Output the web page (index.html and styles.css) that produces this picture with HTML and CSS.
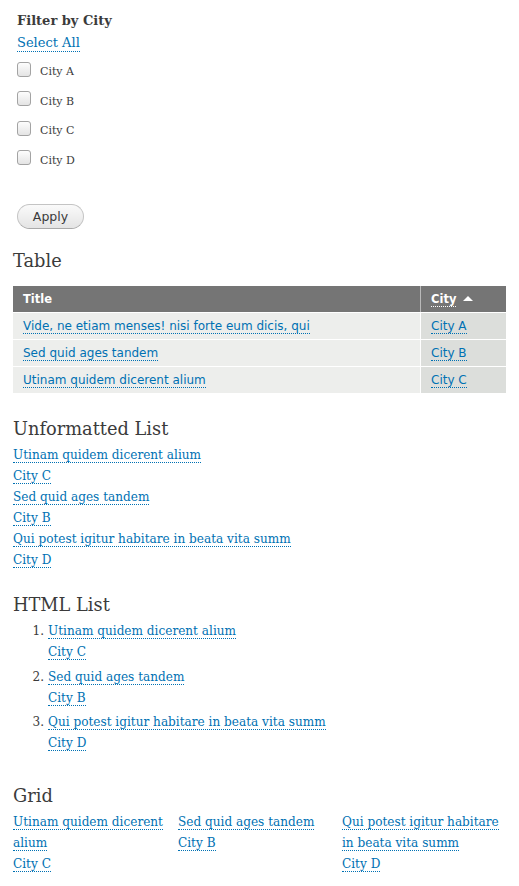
FILE: index.html
```html
<!DOCTYPE html>
<html>
<head>
<meta charset="utf-8">
<link rel="stylesheet" href="styles.css">
</head>
<body>
<div class="page">
  <form class="filter">
    <div class="filter-title">Filter by City</div>
    <a class="lnk select-all" href="#">Select All</a>
    <div class="opts">
      <label class="opt"><input type="checkbox" class="cb"><span>City A</span></label>
      <label class="opt"><input type="checkbox" class="cb"><span>City B</span></label>
      <label class="opt"><input type="checkbox" class="cb"><span>City C</span></label>
      <label class="opt"><input type="checkbox" class="cb"><span>City D</span></label>
    </div>
    <button type="button" class="btn">Apply</button>
  </form>

  <h2 class="h h-table">Table</h2>
  <table class="tbl">
    <thead>
      <tr><th class="c-title">Title</th><th class="c-city"><a class="th-lnk" href="#">City</a><span class="arrow"></span></th></tr>
    </thead>
    <tbody>
      <tr><td class="c-title"><a class="lnk" href="#">Vide, ne etiam menses! nisi forte eum dicis, qui</a></td><td class="c-city"><a class="lnk" href="#">City A</a></td></tr>
      <tr><td class="c-title"><a class="lnk" href="#">Sed quid ages tandem</a></td><td class="c-city"><a class="lnk" href="#">City B</a></td></tr>
      <tr><td class="c-title"><a class="lnk" href="#">Utinam quidem dicerent alium</a></td><td class="c-city"><a class="lnk" href="#">City C</a></td></tr>
    </tbody>
  </table>

  <h2 class="h h-list">Unformatted List</h2>
  <div class="ulist">
    <div class="row"><a class="lnk" href="#">Utinam quidem dicerent alium</a></div>
    <div class="row"><a class="lnk" href="#">City C</a></div>
    <div class="row"><a class="lnk" href="#">Sed quid ages tandem</a></div>
    <div class="row"><a class="lnk" href="#">City B</a></div>
    <div class="row"><a class="lnk" href="#">Qui potest igitur habitare in beata vita summ</a></div>
    <div class="row"><a class="lnk" href="#">City D</a></div>
  </div>

  <h2 class="h h-html">HTML List</h2>
  <ol class="olist">
    <li><div class="row"><a class="lnk" href="#">Utinam quidem dicerent alium</a></div><div class="row"><a class="lnk" href="#">City C</a></div></li>
    <li><div class="row"><a class="lnk" href="#">Sed quid ages tandem</a></div><div class="row"><a class="lnk" href="#">City B</a></div></li>
    <li><div class="row"><a class="lnk" href="#">Qui potest igitur habitare in beata vita summ</a></div><div class="row"><a class="lnk" href="#">City D</a></div></li>
  </ol>

  <h2 class="h h-grid">Grid</h2>
  <div class="grid">
    <div class="cell"><div class="row"><a class="lnk" href="#">Utinam quidem dicerent alium</a></div><div class="row"><a class="lnk" href="#">City C</a></div></div>
    <div class="cell"><div class="row"><a class="lnk" href="#">Sed quid ages tandem</a></div><div class="row"><a class="lnk" href="#">City B</a></div></div>
    <div class="cell"><div class="row"><a class="lnk" href="#">Qui potest igitur habitare in beata vita summ</a></div><div class="row"><a class="lnk" href="#">City D</a></div></div>
  </div>
</div>
</body>
</html>
```

FILE: styles.css
```css
html, body {
  margin: 0;
  padding: 0;
  background: #ffffff;
}
body {
  font-family: "DejaVu Serif", Georgia, serif;
  font-size: 12.1px;
  color: #3b3b3b;
}
.page {
  padding: 12px 13px 0 13px;
}
.lnk {
  color: #0071b3;
  text-decoration: none;
  border-bottom: 1px dotted #0071b3;
}
.filter {
  padding-left: 4px;
  margin: 0;
}
.filter-title {
  font-weight: bold;
  font-size: 13px;
  line-height: 18px;
  color: #3b3b3b;
}
.select-all {
  display: inline-block;
  font-size: 13px;
  line-height: 17px;
  margin-top: 4px;
}
.opts {
  margin-top: 8px;
  display: flex;
  flex-direction: column;
  gap: 11.5px;
}
.opt {
  display: flex;
  align-items: center;
  height: 18px;
  font-size: 11px;
  color: #3b3b3b;
}
.opt span {
  margin-left: 9px;
  padding-top: 5px;
}
.cb {
  appearance: none;
  -webkit-appearance: none;
  margin: 0;
  width: 14px;
  height: 15px;
  border: 1px solid #a3a3a3;
  border-radius: 3px;
  background: linear-gradient(#fdfdfd, #e4e4e4);
  box-sizing: border-box;
}
.btn {
  margin-top: 37px;
  width: 67px;
  height: 25px;
  border: 1px solid #c4c4c4;
  border-bottom-color: #a9a9a9;
  border-radius: 13px;
  background: linear-gradient(#fafafa, #e4e4e4);
  font-family: "DejaVu Sans", Verdana, sans-serif;
  font-size: 12.5px;
  color: #3a3a3a;
  padding: 0;
  display: block;
}
.h {
  font-weight: normal;
  font-size: 17.8px;
  line-height: 24px;
  margin: 0 0 4px 0;
  color: #3b3b3b;
}
.h-table {
  margin-top: 20px;
  margin-bottom: 13px;
}
.tbl {
  width: 493px;
  border-collapse: collapse;
  font-family: "DejaVu Sans", Verdana, sans-serif;
  font-size: 12px;
}
.tbl th {
  background: #757575;
  color: #ffffff;
  text-align: left;
  font-weight: bold;
  font-size: 11.5px;
  height: 26px;
  padding: 0 10px;
  border-bottom: 1px solid #ffffff;
}
.tbl th.c-city {
  border-left: 1px solid #b9b9b9;
}
.th-lnk {
  color: #ffffff;
  text-decoration: none;
  border-bottom: 1px dotted #ffffff;
}
.arrow {
  display: inline-block;
  width: 0;
  height: 0;
  border-left: 5px solid transparent;
  border-right: 5px solid transparent;
  border-bottom: 5px solid #ffffff;
  margin-left: 7px;
  vertical-align: 2px;
}
.tbl td {
  background: #edeeec;
  height: 26px;
  padding: 0 10px;
  border-bottom: 1px solid #ffffff;
}
.tbl td.c-city {
  background: #dcdedb;
  border-left: 1px solid #ffffff;
  width: 65px;
}
.tbl tbody tr:last-child td {
  border-bottom: none;
}
.h-list {
  margin-top: 24px;
}
.row {
  line-height: 21px;
}
.h-html {
  margin-top: 22.5px;
}
.olist {
  margin: 0;
  padding-left: 35px;
}
.olist li {
  margin-bottom: 3.5px;
}
.olist li:last-child {
  margin-bottom: 0;
}
.h-grid {
  margin-top: 29.5px;
}
.grid {
  display: grid;
  grid-template-columns: 165px 164px 164px;
}
.cell {
  padding-right: 6px;
}
```
